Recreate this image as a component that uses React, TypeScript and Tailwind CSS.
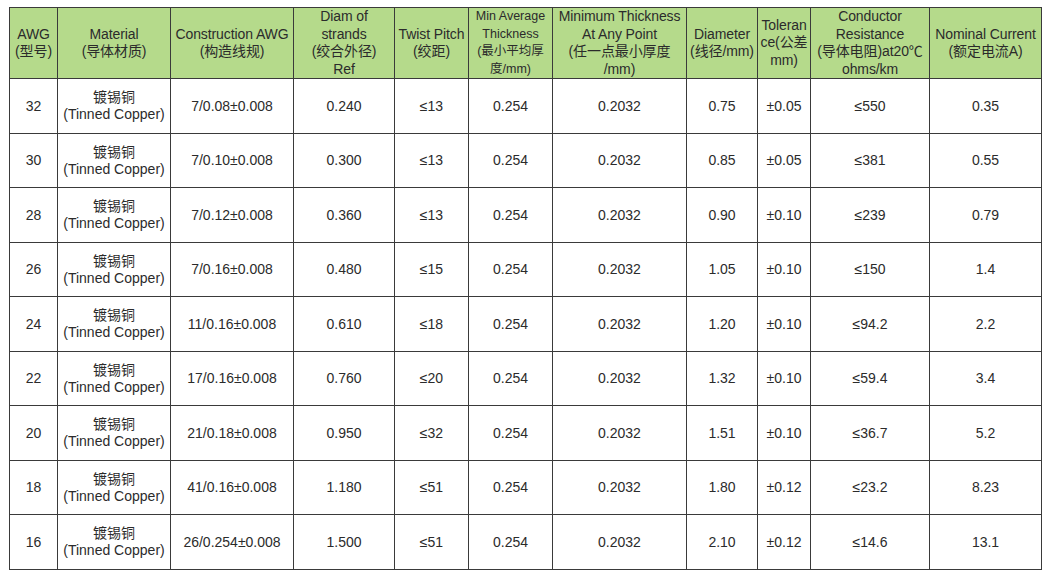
import React from 'react';

type Row = {
  awg: string;
  construction: string;
  strands: string;
  pitch: string;
  diameter: string;
  tolerance: string;
  resistance: string;
  current: string;
};

const rows: Row[] = [
  { awg: '32', construction: '7/0.08±0.008', strands: '0.240', pitch: '≤13', diameter: '0.75', tolerance: '±0.05', resistance: '≤550', current: '0.35' },
  { awg: '30', construction: '7/0.10±0.008', strands: '0.300', pitch: '≤13', diameter: '0.85', tolerance: '±0.05', resistance: '≤381', current: '0.55' },
  { awg: '28', construction: '7/0.12±0.008', strands: '0.360', pitch: '≤13', diameter: '0.90', tolerance: '±0.10', resistance: '≤239', current: '0.79' },
  { awg: '26', construction: '7/0.16±0.008', strands: '0.480', pitch: '≤15', diameter: '1.05', tolerance: '±0.10', resistance: '≤150', current: '1.4' },
  { awg: '24', construction: '11/0.16±0.008', strands: '0.610', pitch: '≤18', diameter: '1.20', tolerance: '±0.10', resistance: '≤94.2', current: '2.2' },
  { awg: '22', construction: '17/0.16±0.008', strands: '0.760', pitch: '≤20', diameter: '1.32', tolerance: '±0.10', resistance: '≤59.4', current: '3.4' },
  { awg: '20', construction: '21/0.18±0.008', strands: '0.950', pitch: '≤32', diameter: '1.51', tolerance: '±0.10', resistance: '≤36.7', current: '5.2' },
  { awg: '18', construction: '41/0.16±0.008', strands: '1.180', pitch: '≤51', diameter: '1.80', tolerance: '±0.12', resistance: '≤23.2', current: '8.23' },
  { awg: '16', construction: '26/0.254±0.008', strands: '1.500', pitch: '≤51', diameter: '2.10', tolerance: '±0.12', resistance: '≤14.6', current: '13.1' },
];

const widths = [48, 113, 123, 101, 74, 84, 134, 71, 53, 119, 112];

// header cells, one line per entry
const headers: { lines: string[]; small?: boolean }[] = [
  { lines: ['AWG', '(型号)'] },
  { lines: ['Material', '(导体材质)'] },
  { lines: ['Construction AWG', '(构造线规)'] },
  { lines: ['Diam of', 'strands', '(绞合外径)', 'Ref'] },
  { lines: ['Twist Pitch', '(绞距)'] },
  { lines: ['Min Average', 'Thickness', '(最小平均厚', '度/mm)'], small: true },
  { lines: ['Minimum Thickness', 'At Any Point', '(任一点最小厚度', '/mm)'] },
  { lines: ['Diameter', '(线径/mm)'] },
  { lines: ['Toleran', 'ce(公差', 'mm)'] },
  { lines: ['Conductor', 'Resistance', '(导体电阻)at20℃', 'ohms/km'] },
  { lines: ['Nominal Current', '(额定电流A)'] },
];

const cell = 'border border-[#3a3a3a] text-center align-middle p-0';

const App: React.FC = () => {
  return (
    <div
      className="w-[1051px] h-[574px] bg-white pl-[9px] pt-[7px] text-[#2b2b2b] text-[14px] leading-[17px]"
      style={{ fontFamily: '"Liberation Sans", "Noto Sans CJK SC", sans-serif' }}
    >
      <table className="table-fixed border-collapse w-[1032px] border-[1.5px] border-[#3a3a3a]">
        <colgroup>
          {widths.map((w, i) => (
            <col key={i} style={{ width: w }} />
          ))}
        </colgroup>
        <thead>
          <tr className="h-[71px] bg-[#b5da8b]">
            {headers.map((h, i) => (
              <th
                key={i}
                className={`${cell} font-normal whitespace-nowrap leading-[17.5px] ${h.small ? 'text-[12.5px]' : 'text-[14px] tracking-[-0.1px]'}`}
              >
                {h.lines.map((l, j) => (
                  <div key={j}>{l}</div>
                ))}
              </th>
            ))}
          </tr>
        </thead>
        <tbody>
          {rows.map((r, i) => (
            <tr key={r.awg} className={i % 2 === 0 ? 'h-[55px]' : 'h-[54px]'}>
              <td className={cell}>{r.awg}</td>
              <td className={cell}>
                <div>镀锡铜</div>
                <div>(Tinned Copper)</div>
              </td>
              <td className={cell}>{r.construction}</td>
              <td className={cell}>{r.strands}</td>
              <td className={cell}>{r.pitch}</td>
              <td className={cell}>0.254</td>
              <td className={cell}>0.2032</td>
              <td className={cell}>{r.diameter}</td>
              <td className={cell}>{r.tolerance}</td>
              <td className={cell}>{r.resistance}</td>
              <td className={cell}>{r.current}</td>
            </tr>
          ))}
        </tbody>
      </table>
    </div>
  );
};

export default App;
